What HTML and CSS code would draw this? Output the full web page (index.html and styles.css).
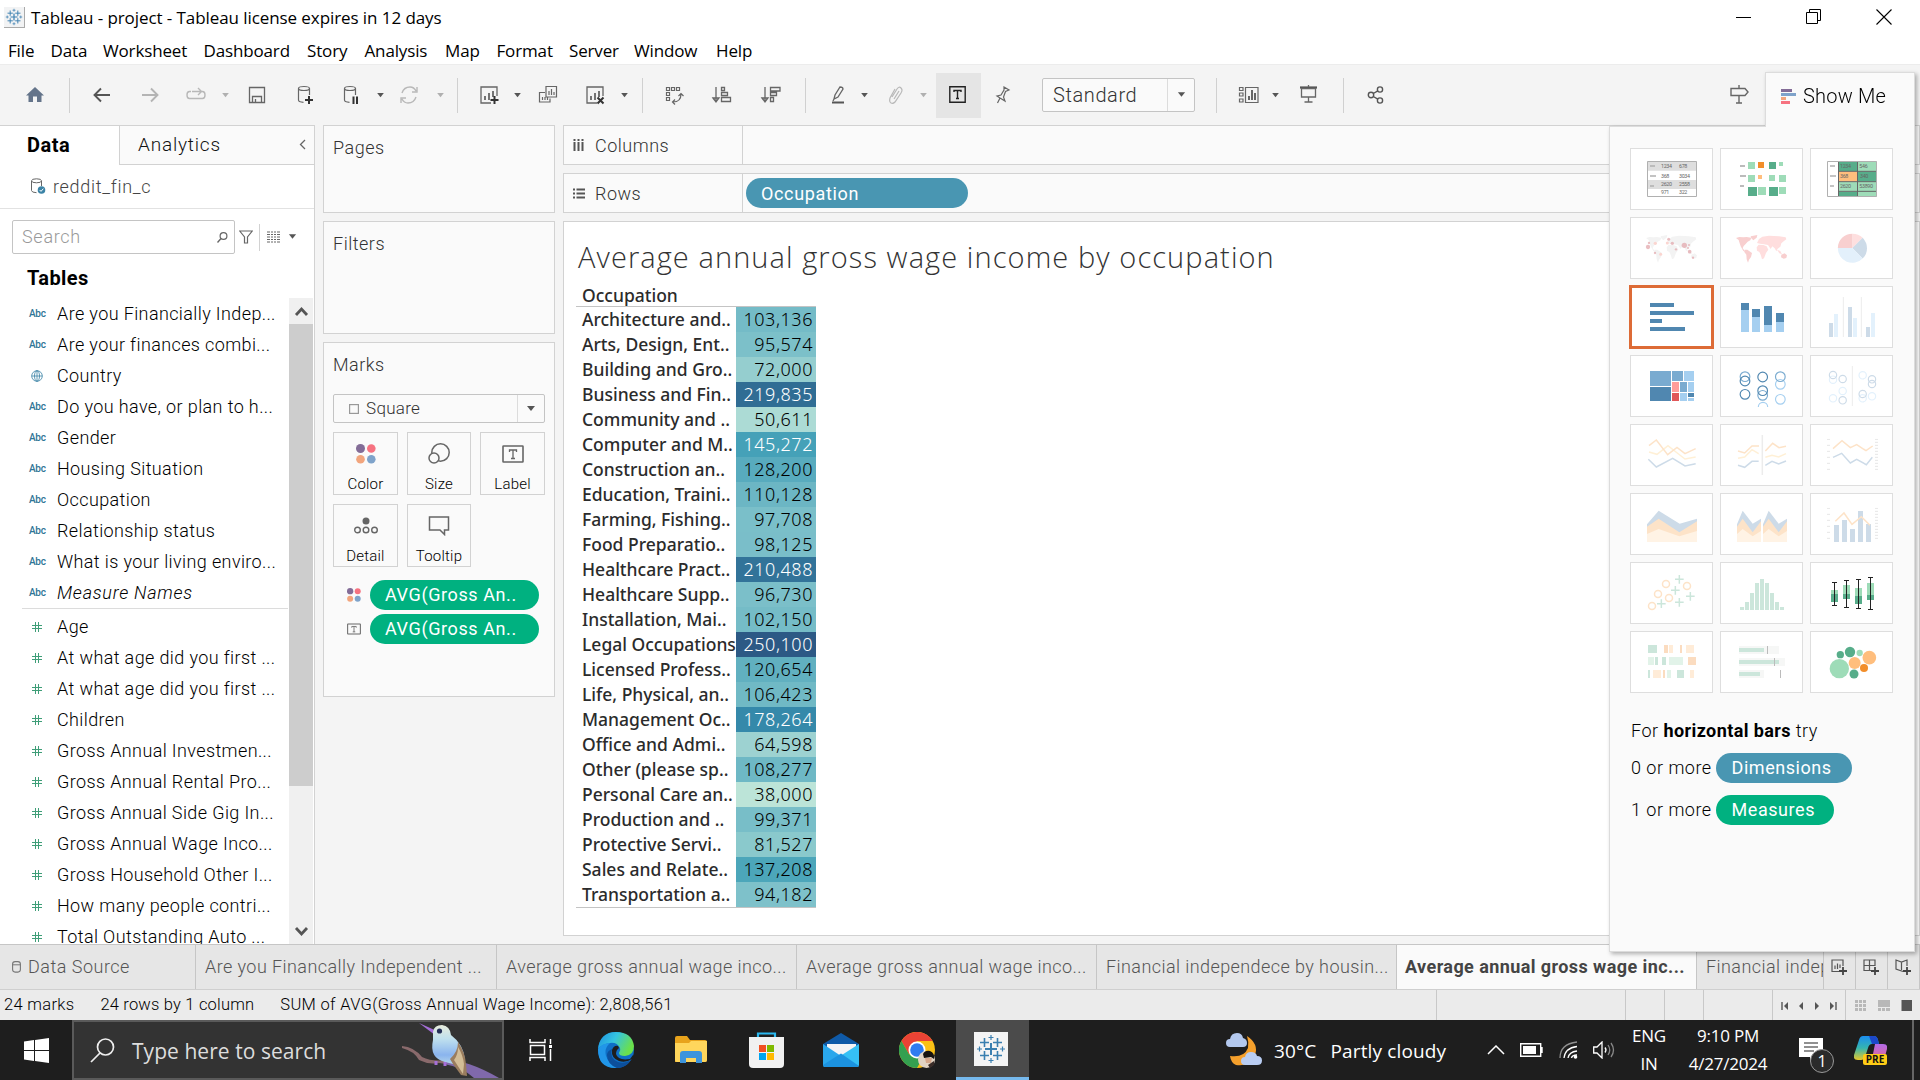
FILE: index.html
```html
<!DOCTYPE html>
<html lang="en">
<head>
<meta charset="utf-8">
<title>Tableau - project</title>
<link rel="stylesheet" href="styles.css">
</head>
<body>
<svg class="defs" aria-hidden="true">
  <symbol id="caret" viewBox="0 0 10 6"><path d="M1 0h8L5 5z" fill="currentColor"/></symbol>
  <symbol id="tableau" viewBox="0 0 34 34"><g stroke="#3a7fb0" fill="none"><path d="M17 11v12M11 17h12" stroke-width="2"/><path d="M10.500 6v9M6 10.500h9M23.500 6v9M19 10.500h9M10.500 19v9M6 23.500h9M23.500 19v9M19 23.500h9" stroke-width="1.600"/><path d="M17 3v5M14.500 5.500h5M17 26v5M14.500 28.500h5M5.500 14.500v5M3 17h5M28.500 14.500v5M26 17h5" stroke-width="1.200"/></g></symbol>
  <symbol id="hash" viewBox="0 0 10 10"><path d="M3.500 0v10M6.500 0v10M0 3.500h10M0 6.500h10" stroke="#3f9e78" stroke-width="1" fill="none"/></symbol>
  <symbol id="colors" viewBox="0 0 20 20"><circle cx="4.500" cy="4.500" r="4.500" fill="#836c97"/><circle cx="15.300" cy="4.500" r="4.300" fill="#f67280"/><circle cx="4.500" cy="15.300" r="4.300" fill="#f2a57d"/><circle cx="15.300" cy="15.300" r="4.300" fill="#7fa3ca"/></symbol>
  <symbol id="tbox" viewBox="0 0 22 18"><rect x="1" y="1" width="20" height="16" rx=".5" fill="none" stroke="currentColor" stroke-width="1.600"/><path d="M7.500 7V5h7v2M11 5v8.500M9 13.500h4" fill="none" stroke="currentColor" stroke-width="1.300"/></symbol>
  <symbol id="chartsheet" viewBox="0 0 26 26"><path d="M15 21H5V5h16v9" fill="none" stroke="#666" stroke-width="1.300"/><path d="M9 18v-4M13 18v-7M17 15V9" stroke="#666" stroke-width="1.800"/></symbol>
  <symbol id="db" viewBox="0 0 26 26"><ellipse cx="12" cy="6.500" rx="5.500" ry="2" fill="none" stroke="#666" stroke-width="1.200"/><path d="M6.500 6.500V18q0 2 5 2.300M17.500 6.500V13" fill="none" stroke="#666" stroke-width="1.200"/></symbol>
  <symbol id="ticks" viewBox="0 0 153 96"><path d="M0 2h9M0 20h9M0 38h9M0 56h9M0 74h9M0 92h9M144 2h9M144 11h9M144 20h9M144 29h9M144 38h9M144 47h9M144 56h9M144 65h9M144 74h9M144 83h9M144 92h9" stroke="#e6e6e6" stroke-width="3"/></symbol>
</svg>

<header class="titlebar">
  <svg class="app-icon"><use href="#tableau"/></svg>
  <span class="title">Tableau - project - Tableau license expires in 12 days</span>
  <div class="window-buttons">
    <svg width="16" height="20" viewBox="0 0 16 20"><path d="M0 10.500h15" stroke="#000"/></svg>
    <svg width="16" height="20" viewBox="0 0 16 20"><path d="M.5 5.500h11v11H.5zM3.500 5V2.500h11v11h-3" fill="none" stroke="#000"/></svg>
    <svg width="16" height="20" viewBox="0 0 16 20"><path d="M.5 2.500l15 15M15.500 2.500l-15 15" stroke="#000" stroke-width="1.100"/></svg>
  </div>
</header>
<nav class="menubar"><span>File</span><span>Data</span><span>Worksheet</span><span>Dashboard</span><span>Story</span><span>Analysis</span><span>Map</span><span>Format</span><span>Server</span><span>Window</span><span>Help</span></nav>

<div class="toolbar">
  <svg class="tool" viewBox="0 0 26 26"><path d="M13 5L4 13.500h2.500V20h4.500v-5.500h4V20h4.500v-6.500H22z" fill="#64748a"/></svg>
  <i class="sep"></i>
  <svg class="tool" viewBox="0 0 26 26"><path d="M21 13H6M12 6.500L5.500 13l6.500 6.500" fill="none" stroke="#555" stroke-width="1.900"/></svg>
  <svg class="tool" viewBox="0 0 26 26"><path d="M5 13h15M14 6.500l6.500 6.500-6.500 6.500" fill="none" stroke="#b4b4b4" stroke-width="1.900"/></svg>
  <svg class="tool" viewBox="0 0 26 26"><path d="M8 9.500H6.500Q4 9.500 4 13t2.500 3.500h13Q22 16.500 22 13t-2.500-3.500H9M15 6l3.500 3.500L15 13" fill="none" stroke="#b8b8b8" stroke-width="1.400"/></svg>
  <svg class="caret faint"><use href="#caret"/></svg>
  <svg class="tool" viewBox="0 0 26 26"><path d="M5.500 5.500h15v15h-15zM8.500 20v-5.500h9V20M11.500 20v-3" fill="none" stroke="#666" stroke-width="1.300"/></svg>
  <svg class="tool" viewBox="0 0 26 26"><use href="#db"/><path d="M17 14v8M13 18h8" stroke="#333" stroke-width="2"/></svg>
  <svg class="tool" viewBox="0 0 26 26"><use href="#db"/><path d="M15.500 14.500V22M19 14.500V22" stroke="#333" stroke-width="2"/></svg>
  <svg class="caret"><use href="#caret"/></svg>
  <svg class="tool" viewBox="0 0 26 26"><path d="M6 11q2-6 8-6 4 0 6 4M20 15q-2 6-8 6-4 0-6-4M21 5v5h-5M5 21v-5h5" fill="none" stroke="#b8b8b8" stroke-width="1.400"/></svg>
  <svg class="caret faint"><use href="#caret"/></svg>
  <i class="sep"></i>
  <svg class="tool" viewBox="0 0 26 26"><use href="#chartsheet"/><path d="M18.500 14v8M14.500 18h8" stroke="#333" stroke-width="2"/></svg>
  <svg class="caret"><use href="#caret"/></svg>
  <svg class="tool" viewBox="0 0 26 26"><path d="M11 4.500h10.500V15H11zM10 10.500H4.500V20H15v-3.500M7.500 18v-3M10 18v-3M12.500 18v-3M14 13V9M16.500 13V7M19 13v-3" fill="none" stroke="#666" stroke-width="1.200"/></svg>
  <svg class="tool" viewBox="0 0 26 26"><use href="#chartsheet"/><path d="M15.500 15.500l6 6M21.500 15.500l-6 6" stroke="#333" stroke-width="2"/></svg>
  <svg class="caret"><use href="#caret"/></svg>
  <i class="sep"></i>
  <svg class="tool" viewBox="0 0 26 26"><path d="M5.500 5.500h3v3h-3zM10.500 5.500h3v3h-3zM15.500 5.500h3v3h-3zM5.500 10.500h3v3h-3zM5.500 15.500h3v3h-3zM12 20q8 0 8-8M14 17.500L11.500 20l2.500 2.500M17.500 14l2.500-2.500 2.500 2.500" fill="none" stroke="#666" stroke-width="1.200"/></svg>
  <svg class="tool" viewBox="0 0 26 26"><path d="M7 5v14M4 16l3 4 3-4zM12.500 5.500h3v3h-3zM12.500 10.500h6v3h-6zM12.500 15.500h9v4h-9z" fill="none" stroke="#666" stroke-width="1.300"/></svg>
  <svg class="tool" viewBox="0 0 26 26"><path d="M7 5v14M4 16l3 4 3-4zM12.500 5.500h9.500v3.500h-9.500zM12.500 10.500h6v3h-6zM12.500 15.500h3v4h-3z" fill="none" stroke="#666" stroke-width="1.300"/></svg>
  <i class="sep"></i>
  <svg class="tool" viewBox="0 0 26 26"><path d="M9 17l1-4 5-8q3 0 3 2l-5 8zl-1 2" fill="none" stroke="#666" stroke-width="1.300"/><path d="M7 20.500h12" stroke="#555" stroke-width="2"/></svg>
  <svg class="caret"><use href="#caret"/></svg>
  <svg class="tool" viewBox="0 0 26 26"><path d="M10 15l5-8q2-3 4-1t0 5l-6 9q-2 2-4 1t-1-5l5-9M12 17l5-8" fill="none" stroke="#b8b8b8" stroke-width="1.200"/></svg>
  <svg class="caret faint"><use href="#caret"/></svg>
  <span class="tool-active"><svg width="17" height="17" viewBox="0 0 17 17"><path d="M.8.800h15.400v15.400H.8zM5 6V4.500h7V6M8.500 4.500v8M7 12.500h3" fill="none" stroke="#222" stroke-width="1.400"/></svg></span>
  <svg class="tool" viewBox="0 0 26 26"><path d="M14 5l5 3-3.500 1.500L13.500 15l1.500 4-5-3-3-2 4-1 3-5zM10 16l-2.500 5" fill="none" stroke="#666" stroke-width="1.200"/></svg>
  <span class="fit-select"><span>Standard</span><b><svg class="caret-lg"><use href="#caret"/></svg></b></span>
  <i class="sep"></i>
  <svg class="tool" viewBox="0 0 26 26"><path d="M3.500 5.500h3.500v3H3.500zM3.500 11h3.500v3H3.500zM3.500 17h3.500v3H3.500zM9.500 5.500H22v15H9.500z" fill="none" stroke="#666" stroke-width="1.200"/><path d="M13 18v-4M16 18V8M19 18v-7" stroke="#666" stroke-width="2"/></svg>
  <svg class="caret"><use href="#caret"/></svg>
  <svg class="tool" viewBox="0 0 26 26"><path d="M5 5.500h17" stroke="#555" stroke-width="2.200"/><path d="M13.500 3v2M6.500 6.500h14V15h-14zM13.500 15v5M9.500 20h8" fill="none" stroke="#666" stroke-width="1.300"/></svg>
  <i class="sep"></i>
  <svg class="tool" viewBox="0 0 26 26"><g fill="none" stroke="#555" stroke-width="1.400"><circle cx="8" cy="13" r="2.700"/><circle cx="17" cy="7.500" r="2.600"/><circle cx="17" cy="18.500" r="2.600"/><path d="M10.300 11.500l4.500-2.700M10.300 14.500l4.500 2.700"/></g></svg>
  <svg class="tool" viewBox="0 0 26 26"><path d="M5 6.500h14l3 3.500-3 3.500H5zM13 3v3.500M13 13.500V21M10 21h6" fill="none" stroke="#666" stroke-width="1.400"/></svg>
</div>

<main class="workspace">
  <aside class="data-pane">
    <div class="pane-tabs"><b>Data</b><div class="analytics"><span>Analytics</span><svg width="7" height="11" viewBox="0 0 7 11"><path d="M6 1L1.500 5.500 6 10" fill="none" stroke="#666" stroke-width="1.300"/></svg></div></div>
    <div class="source"><svg width="15" height="17" viewBox="0 0 15 17"><ellipse cx="5.500" cy="2.800" rx="5" ry="2" fill="none" stroke="#666"/><path d="M.5 3v9.500q0 2 5 2.200M10.500 3v5" fill="none" stroke="#666"/><circle cx="10.500" cy="12" r="3.800" fill="#3b83a6"/><path d="M8.700 12l1.300 1.400 2.300-2.700" fill="none" stroke="#fff"/></svg><span>reddit_fin_c</span></div>
    <div class="search-row">
      <div class="search-box"><span>Search</span><svg width="11" height="11" viewBox="0 0 11 11"><circle cx="6.500" cy="4" r="3.400" fill="none" stroke="#666" stroke-width="1.200"/><path d="M4 6.500L.5 10.500" stroke="#666" stroke-width="1.300"/></svg></div>
      <svg width="14" height="14" viewBox="0 0 14 14"><path d="M.7 1h12.600L8.500 7v6h-3V7z" fill="none" stroke="#666" stroke-width="1.200"/></svg>
      <i></i>
      <svg width="13" height="12" viewBox="0 0 13 12"><path d="M0 1h3M4 1h2M7 1h2M10 1h3M0 3.500h3M4 3.500h2M7 3.500h2M10 3.500h3M0 6h3M4 6h2M7 6h2M10 6h3M0 8.500h3M4 8.500h2M7 8.500h2M10 8.500h3M0 11h3M4 11h2M7 11h2M10 11h3" stroke="#666" stroke-width="1.200"/></svg>
      <svg class="caret-sm"><use href="#caret"/></svg>
    </div>
    <h3>Tables</h3>
    <div class="field-area">
      <ul class="fields">
        <li><em>Abc</em>Are you Financially Indep...</li>
        <li><em>Abc</em>Are your finances combi...</li>
        <li><svg width="12" height="12" viewBox="0 0 12 12"><g fill="none" stroke="#3b83a6" stroke-width=".8"><circle cx="6" cy="6" r="5.300"/><ellipse cx="6" cy="6" rx="2.500" ry="5.300"/><path d="M.7 6h10.600M6 .7v10.600"/></g></svg>Country</li>
        <li><em>Abc</em>Do you have, or plan to h...</li>
        <li><em>Abc</em>Gender</li>
        <li><em>Abc</em>Housing Situation</li>
        <li><em>Abc</em>Occupation</li>
        <li><em>Abc</em>Relationship status</li>
        <li><em>Abc</em>What is your living enviro...</li>
        <li class="generated"><em>Abc</em>Measure Names</li>
        <li class="rule"></li>
        <li><svg class="hash"><use href="#hash"/></svg>Age</li>
        <li><svg class="hash"><use href="#hash"/></svg>At what age did you first ...</li>
        <li><svg class="hash"><use href="#hash"/></svg>At what age did you first ...</li>
        <li><svg class="hash"><use href="#hash"/></svg>Children</li>
        <li><svg class="hash"><use href="#hash"/></svg>Gross Annual Investmen...</li>
        <li><svg class="hash"><use href="#hash"/></svg>Gross Annual Rental Pro...</li>
        <li><svg class="hash"><use href="#hash"/></svg>Gross Annual Side Gig In...</li>
        <li><svg class="hash"><use href="#hash"/></svg>Gross Annual Wage Inco...</li>
        <li><svg class="hash"><use href="#hash"/></svg>Gross Household Other I...</li>
        <li><svg class="hash"><use href="#hash"/></svg>How many people contri...</li>
        <li><svg class="hash"><use href="#hash"/></svg>Total Outstanding Auto ...</li>
      </ul>
      <div class="scrollbar">
        <svg width="24" height="26" viewBox="0 0 24 26"><path d="M7 17l5.500-6 5.500 6" fill="none" stroke="#555" stroke-width="2.800"/></svg>
        <div class="thumb"></div>
        <svg width="24" height="26" viewBox="0 0 24 26"><path d="M7 10l5.500 6 5.500-6" fill="none" stroke="#555" stroke-width="2.800"/></svg>
      </div>
    </div>
  </aside>

  <section class="cards">
    <div class="card pages">Pages</div>
    <div class="card filters">Filters</div>
    <div class="card marks">Marks
      <div class="mark-type"><svg width="10" height="10" viewBox="0 0 10 10"><rect x=".6" y=".6" width="8.800" height="8.800" fill="none" stroke="#999" stroke-width="1.200"/></svg><span>Square</span><b><svg class="caret-sm"><use href="#caret"/></svg></b></div>
      <div class="mark-buttons">
        <div><svg width="20" height="20"><use href="#colors"/></svg>Color</div>
        <div><svg width="22" height="22" viewBox="0 0 22 22"><circle cx="12.500" cy="9.500" r="8.700" fill="none" stroke="#666" stroke-width="1.500"/><circle cx="6" cy="15" r="5" fill="#fafafa" stroke="#666" stroke-width="1.500"/></svg>Size</div>
        <div><svg width="22" height="18" class="t"><use href="#tbox"/></svg>Label</div>
        <div><svg width="24" height="18" viewBox="0 0 24 18"><circle cx="12" cy="4" r="3.500" fill="#666"/><g fill="none" stroke="#666" stroke-width="1.400"><circle cx="3.500" cy="13" r="2.800"/><circle cx="12" cy="13" r="2.800"/><circle cx="20.500" cy="13" r="2.800"/></g></svg>Detail</div>
        <div><svg width="22" height="20" viewBox="0 0 22 20"><path d="M1.500 1h19v13h-4v4.500L12 14H1.500z" fill="none" stroke="#666" stroke-width="1.500"/></svg>Tooltip</div>
      </div>
      <div class="mark-pill"><svg width="14" height="14"><use href="#colors"/></svg><span class="pill green">AVG(Gross An..</span></div>
      <div class="mark-pill"><svg width="14" height="12" class="t"><use href="#tbox"/></svg><span class="pill green">AVG(Gross An..</span></div>
    </div>
  </section>

  <section class="sheet">
    <div class="shelf"><div class="shelf-name"><svg width="11" height="12" viewBox="0 0 11 12"><path d="M1.500 0v2M5.500 0v2M9.500 0v2M1.500 3v9M5.500 3v9M9.500 3v9" stroke="#555" stroke-width="2"/></svg><span>Columns</span></div></div>
    <div class="shelf"><div class="shelf-name rows"><svg width="12" height="11" viewBox="0 0 12 11"><path d="M0 1.500h2M0 5.500h2M0 9.500h2M3.500 1.500H12M3.500 5.500H12M3.500 9.500H12" stroke="#555" stroke-width="1.800"/></svg><span>Rows</span></div><span class="pill blue">Occupation</span></div>
    <div class="view">
      <h1>Average annual gross wage income by occupation</h1>
      <div class="crosstab">
        <div class="head">Occupation</div>
        <div class="row"><span>Architecture and..</span><b style="background:#74bbc7">103,136</b></div>
        <div class="row"><span>Arts, Design, Ent..</span><b style="background:#7cc0c9">95,574</b></div>
        <div class="row"><span>Building and Gro..</span><b style="background:#95cecf">72,000</b></div>
        <div class="row"><span>Business and Fin..</span><b class="dark" style="background:#306d94">219,835</b></div>
        <div class="row"><span>Community and ..</span><b style="background:#acdbd5">50,611</b></div>
        <div class="row"><span>Computer and M..</span><b class="dark" style="background:#45a1b8">145,272</b></div>
        <div class="row"><span>Construction an..</span><b style="background:#58abbe">128,200</b></div>
        <div class="row"><span>Education, Traini..</span><b style="background:#6cb6c4">110,128</b></div>
        <div class="row"><span>Farming, Fishing..</span><b style="background:#7abfc9">97,708</b></div>
        <div class="row"><span>Food Preparatio..</span><b style="background:#7abec9">98,125</b></div>
        <div class="row"><span>Healthcare Pract..</span><b class="dark" style="background:#327399">210,488</b></div>
        <div class="row"><span>Healthcare Supp..</span><b style="background:#7bbfc9">96,730</b></div>
        <div class="row"><span>Installation, Mai..</span><b style="background:#75bcc7">102,150</b></div>
        <div class="row"><span>Legal Occupations</span><b class="dark" style="background:#2c5985">250,100</b></div>
        <div class="row"><span>Licensed Profess..</span><b style="background:#61b0c0">120,654</b></div>
        <div class="row"><span>Life, Physical, an..</span><b style="background:#70b9c5">106,423</b></div>
        <div class="row"><span>Management Oc..</span><b class="dark" style="background:#3589aa">178,264</b></div>
        <div class="row"><span>Office and Admi..</span><b style="background:#9dd2d1">64,598</b></div>
        <div class="row"><span>Other (please sp..</span><b style="background:#6eb8c5">108,277</b></div>
        <div class="row"><span>Personal Care an..</span><b style="background:#bce4d8">38,000</b></div>
        <div class="row"><span>Production and ..</span><b style="background:#78bec8">99,371</b></div>
        <div class="row"><span>Protective Servi..</span><b style="background:#8ac9cc">81,527</b></div>
        <div class="row"><span>Sales and Relate..</span><b style="background:#4ca6ba">137,208</b></div>
        <div class="row"><span>Transportation a..</span><b style="background:#7ec1ca">94,182</b></div>
      </div>
    </div>
  </section>
</main>

<aside class="show-me">
  <div class="show-me-tab"><svg width="15" height="15" viewBox="0 0 15 15"><path d="M0 0h11v3H0z" fill="#836c97"/><path d="M0 4h15v3H0z" fill="#7fa3ca"/><path d="M0 8h5v3H0z" fill="#f2a57d"/><path d="M0 12h9v3H0z" fill="#f67280"/></svg>Show Me</div>
  <div class="show-me-body">
    <div class="tiles">
      <svg viewBox="60 84 249 186"><path d="M112 124h148v106H112z" fill="#fff"/><path d="M112 124h148v28H112zM112 180h148v27H112z" fill="#dedede"/><path d="M112.500 124.500h147v105h-147z" fill="none" stroke="#b0b0b0" stroke-width="3"/><path d="M120 138h15M120 168h18M120 198h12" stroke="#b0b0b0" stroke-width="5"/><g class="tiny"><text x="153" y="145">1234</text><text x="207" y="145">678</text><text x="153" y="173">368</text><text x="207" y="173">3034</text><text x="153" y="199">2620</text><text x="207" y="199">2558</text><text x="153" y="223">971</text><text x="207" y="223">322</text></g></svg>
      <svg viewBox="330 84 249 186"><path d="M390 138h15M390 168h18M390 198h12" stroke="#bbb" stroke-width="6"/><path d="M414 126h21v21h-21zM507 126h12v12h-12zM414 165h21v21h-21zM477 165h18v18h-18zM507 165h21v21h-21zM444 201h24v24h-24zM507 201h21v21h-21z" fill="#9edcb8"/><path d="M477 126h21v21h-21zM414 201h27v27h-27zM477 201h27v27h-27z" fill="#57ad8a"/><path d="M444 126h18v18h-18z" fill="#f28e2b"/><path d="M444 165h12v12h-12z" fill="#ffbe7d"/></svg>
      <svg viewBox="600 84 249 186"><path d="M652 124h148v106H652z" fill="#fff"/><path d="M685 124h57v30h-57zM742 154h58v31h-58zM685 215h57v15h-57z" fill="#57ad8a"/><path d="M742 124h58v30h-58zM685 185h115v30H685zM742 215h58v15h-58z" fill="#9edcb8"/><path d="M685 154h57v31h-57z" fill="#ffbe7d"/><path d="M685.500 126v102M742.500 126v102M685 154h115M685 185h115M685 214h115" stroke="#666" stroke-width="3"/><path d="M652.500 124.500h147v105h-147z" fill="none" stroke="#b0b0b0" stroke-width="3"/><path d="M660 138h15M660 168h18M660 198h12" stroke="#b0b0b0" stroke-width="5"/><g class="tiny"><text x="690" y="144">1234</text><text x="748" y="144">546</text><text x="690" y="175">368</text><text x="750" y="175">340</text><text x="690" y="205">2620</text><text x="748" y="205">53890</text></g></svg>

      <svg viewBox="60 291 249 186"><g fill="#f3f3f3"><path d="M108 354l10-3 12 1 10-1 14 2-3 8-8 4-6 7-6 6-3 7 6 7 4 5-8-4-8-14-4-12-2-7zM152 349l20-4-2 8-10 8-6-6z"/><path d="M134 389l8 0 14 10-3 12-6 8-3 9-4-10-1-14-6-8z"/><path d="M176 374l14 1 10 4 5 10-7 10-6 16-6 3-4-14-4-8-7-4-1-10z"/><path d="M171 369l6-12 10-7 20-3 30 2 20 3 2 6-8 6-7 6-3 10-8 6-4 8-5-9-7-6-5 8-8-12-12-2-12-2zM231 389l10 4 5 10-8-3z"/><path d="M244 404l10-4 7 6-2 8-8 2-8-4z"/></g><g fill="#e3a9ae" opacity=".75"><circle cx="114" cy="381" r="6.500"/><circle cx="223" cy="376" r="8"/><circle cx="239" cy="395" r="5.500"/><circle cx="187" cy="370" r="5"/><circle cx="176" cy="358" r="4.500"/><circle cx="135" cy="399" r="3.500"/><circle cx="249" cy="413" r="3.500"/><circle cx="198" cy="388" r="3.500"/><circle cx="117" cy="369" r="3.500"/><circle cx="234" cy="384" r="3"/><circle cx="237" cy="375" r="3"/></g><g fill="#fbd5d0"><circle cx="136" cy="370" r="5"/><circle cx="152" cy="403" r="4.500"/><circle cx="172" cy="369" r="4.500"/></g></svg>
      <svg viewBox="330 291 249 186"><g transform="translate(270)"><g fill="#f8cfcf"><path d="M108 354l10-3 12 1 10-1 14 2-3 8-8 4-6 7-6 6-3 7 6 7 4 5-8-4-8-14-4-12-2-7zM152 349l20-4-2 8-10 8-6-6z"/><path d="M134 389l8 0 14 10-3 12-6 8-3 9-4-10-1-14-6-8zM244 404l10-4 7 6-2 8-8 2-8-4z"/></g><g fill="#ffdede"><path d="M176 374l14 1 10 4 5 10-7 10-6 16-6 3-4-14-4-8-7-4-1-10z"/><path d="M171 369l6-12 10-7 20-3 30 2 20 3 2 6-8 6-7 6-3 10-8 6-4 8-5-9-7-6-5 8-8-12-12-2-12-2zM231 389l10 4 5 10-8-3z"/></g></g></svg>
      <svg viewBox="600 291 249 186"><path d="M727 384V341a43.500 43.500 0 0 1 31 12.500z" fill="#fedfdf"/><path d="M727 384l31-30.500a43.500 43.500 0 0 1 0 62z" fill="#cddbe8"/><path d="M727 384l31 31.500a43.500 43.500 0 0 1-74.500-31.500z" fill="#e3f0fb"/><path d="M727 384h-43.500A43.500 43.500 0 0 1 727 341z" fill="#f8cfcf"/></svg>

      <svg class="selected" viewBox="60 498 249 186"><path d="M120 555h72M120 579h132M120 603h36M120 627h105" stroke="#5087b0" stroke-width="12"/></svg>
      <svg viewBox="330 498 249 186"><path d="M393 570h24v66h-24zM426 591h24v45h-24zM462 615h24v21h-24zM498 606h24v30h-24z" fill="#a5cff0"/><path d="M393 549h24v21h-24zM426 567h24v24h-24zM462 558h24v57h-24zM498 579h24v27h-24z" fill="#5087b0"/></svg>
      <svg viewBox="600 498 249 186"><path d="M700 531v120M754 531v120" stroke="#ececec" stroke-width="3"/><path d="M657 609h12v42h-12zM714 561h12v90h-12zM768 621h12v30h-12z" fill="#cddbe8"/><path d="M672 582h12v69h-12zM729 594h12v57h-12zM783 579h12v72h-12z" fill="#e3f1fc"/></svg>

      <svg viewBox="60 705 249 186"><path d="M120 753h63v45h-63zM186 753h33v30h-33zM210 786h21v30h-21z" fill="#7aabd0"/><path d="M120 801h63v42h-63zM234 819h18v12h-18z" fill="#5087b0"/><path d="M222 753h30v30h-30zM234 786h18v30h-18zM210 819h21v24h-21zM234 834h18v9h-18z" fill="#a5cff0"/><path d="M186 786h21v30h-21z" fill="#ff9d9a"/><path d="M186 819h21v24h-21z" fill="#e15759"/></svg>
      <svg viewBox="330 705 249 186"><g fill="none" stroke-width="3.500"><g stroke="#a5cff0"><circle cx="511" cy="793" r="14.500"/><circle cx="511" cy="838" r="14.500"/><path d="M445 861a14 14 0 0 1 28 0"/></g><g stroke="#7aabd0"><circle cx="405" cy="770" r="14.500"/><circle cx="511" cy="770" r="14.500"/><circle cx="458" cy="826" r="14.500"/></g><g stroke="#5087b0"><circle cx="405" cy="783" r="14.500"/><circle cx="405" cy="823" r="14.500"/><circle cx="458" cy="771" r="14.500"/><circle cx="458" cy="812" r="14.500"/></g></g></svg>
      <svg viewBox="600 705 249 186"><path d="M727 738v120" stroke="#ececec" stroke-width="3"/><g fill="none" stroke-width="3.500"><g stroke="#e3f1fc"><circle cx="669" cy="779" r="11"/><circle cx="698" cy="813" r="11"/><circle cx="669" cy="835" r="11"/><circle cx="758" cy="766" r="11"/><circle cx="758" cy="835" r="11"/><circle cx="786" cy="829" r="11"/></g><g stroke="#cddbe8"><circle cx="669" cy="765" r="11"/><circle cx="698" cy="777" r="11"/><circle cx="698" cy="841" r="11"/><circle cx="786" cy="778" r="11"/><circle cx="786" cy="792" r="11"/><circle cx="758" cy="822" r="11"/></g></g></svg>

      <svg class="lines" viewBox="60 912 249 186"><path d="M117 996l24 7 33-26 20 16 31 24 32-6" stroke="#fff0d6"/><path d="M117 977l22-17 34 44 28-22 24 19 32-15" stroke="#fde3c8"/><path d="M115 1018l24 23 49-26 37 23 32-7" stroke="#cddbe8"/></svg>
      <svg class="lines" viewBox="330 912 249 186"><path class="divider" d="M457 945v120"/><path d="M384 1015l20-4 22-22 20 12M466 1012l20-6 20 5 22-10" stroke="#fff0d6"/><path d="M384 993l20 6 22-21h21M466 993l22-23 19 13 21-4" stroke="#fde3c8"/><path d="M384 1036l20 6 22-18h20M466 1036l20-12 20 8 22-9" stroke="#cddbe8"/></svg>
      <svg class="lines" viewBox="600 912 249 186"><use href="#ticks" x="651" y="956" width="153" height="96"/><path d="M669 986l27-24 25 21 19-9 28 18 20-14" stroke="#fde3c8"/><path d="M669 1012l26-12 26 29 19-11 29 16 18-22" stroke="#cddbe8"/></svg>

      <svg viewBox="60 69 249 186"><path d="M111 163l35-41 63 39 52-15v70H111z" fill="#cddbe8"/><path d="M111 170l35-24 62 41 53-33v62H111z" fill="#fde3c8"/><path d="M111 192l35-15 62 22 53-16v33H111z" fill="#fff3e5"/></svg>
      <svg viewBox="330 69 249 186"><path d="M381 163l17-41 30 39 25-15v70h-72zM459 163l17-41 30 39 25-15v70h-72z" fill="#cddbe8"/><path d="M381 170l17-24 30 41 25-33v62h-72zM459 170l17-24 30 41 25-33v62h-72z" fill="#fde3c8"/><path d="M381 192l17-15 30 22 25-16v33h-72zM459 192l17-15 30 22 25-16v33h-72z" fill="#fff3e5"/></svg>
      <svg class="lines" viewBox="600 69 249 186"><use href="#ticks" x="651" y="113" width="153" height="96"/><path d="M672 165h15v51h-15zM696 150h15v66h-15zM720 177h15v39h-15zM744 123h15v93h-15zM768 162h15v54h-15z" fill="#cddbe8"/><path d="M676 154l26-25 24 34 28-23 26 26" stroke="#fde3c8"/></svg>

      <svg class="lines" viewBox="60 276 249 186"><g stroke="#fde3c8"><circle cx="168" cy="342" r="10.500"/><circle cx="231" cy="348" r="10.500"/><circle cx="144" cy="372" r="10.500"/><circle cx="177" cy="384" r="10.500"/><circle cx="126" cy="408" r="10.500"/></g><path class="plus" d="M208 315v26M195 328h26M196 348v26M183 361h26M241 366v26M228 379h26M208 384v26M195 397h26M154 388v26M141 401h26"/></svg>
      <svg viewBox="330 276 249 186"><path d="M390 411h12v9h-12zM405 396h12v24h-12zM420 369h12v51h-12zM435 339h12v81h-12zM450 327h12v93h-12zM465 339h12v81h-12zM480 369h12v51h-12zM495 396h12v24h-12zM510 411h12v9h-12z" fill="#cce6db"/></svg>
      <svg viewBox="600 276 249 186"><path d="M663 360h21v12h-21zM699 345h21v27h-21zM735 354h21v24h-21zM771 339h21v36h-21z" fill="#9edcb8"/><path d="M663 372h21v24h-21zM699 372h21v15h-21zM735 378h21v24h-21zM771 375h21v15h-21z" fill="#57ad8a"/><path d="M673.500 337v69M666 337.500h15M666 406.500h15M709.500 331v81M702 331.500h15M702 412.500h15M745.500 328v87M738 328.500h15M738 415.500h15M781.500 322v96M774 322.500h15M774 418.500h15" stroke="#222" stroke-width="3"/></svg>

      <svg viewBox="60 483 249 186"><path d="M114 525h27v24h-27zM135 561h9v24h-9zM156 561h12v24h-12zM114 600h6v24h-6zM201 600h21v24h-21z" fill="#cce6db"/><path d="M114 561h18v24h-18zM177 561h42v24h-42zM171 600h12v24h-12z" fill="#e2f3e9"/><path d="M162 525h12v24h-12zM210 525h6v24h-6zM234 561h24v24h-24zM159 600h6v24h-6z" fill="#fbdcc0"/><path d="M177 525h12v24h-12zM228 525h24v24h-24zM129 600h24v24h-24zM240 600h12v24h-12z" fill="#ffecd8"/></svg>
      <svg viewBox="330 483 249 186"><path d="M387 528h120v24H387zM387 564h138v24H387zM387 600h75v24h-75z" fill="#f6f7f6"/><path d="M387 540h75M387 576h120M387 612h63" stroke="#cce6db" stroke-width="12"/><path d="M472.500 528v24M493.500 564v24M511.500 600v24" stroke="#bbb" stroke-width="3"/></svg>
      <svg viewBox="600 483 249 186"><g fill="#57ad8a"><circle cx="691" cy="554" r="11"/><circle cx="720" cy="546" r="15.500"/><circle cx="732" cy="612" r="13.500"/></g><circle cx="688" cy="596" r="29" fill="#9edcb8"/><circle cx="749" cy="549" r="9.500" fill="#9edcb8"/><circle cx="734" cy="579" r="18" fill="#ffbe7d"/><circle cx="778" cy="563" r="20.500" fill="#ffbe7d"/><circle cx="762" cy="594" r="12" fill="#f28e2b"/></svg>
    </div>
    <p class="hint">For <b>horizontal bars</b> try</p>
    <div class="need">0 or more <span class="pill blue">Dimensions</span></div>
    <div class="need second">1 or more <span class="pill green">Measures</span></div>
  </div>
</aside>

<div class="sheet-tabs">
  <span class="tab source-tab"><svg width="9" height="12" viewBox="0 0 9 12"><rect x=".6" y=".6" width="7.800" height="10.500" rx="2.500" fill="none" stroke="#777" stroke-width="1.100"/><path d="M.6 3.800h7.800" stroke="#777"/></svg>Data Source</span>
  <span class="tab">Are you Financally Independent ...</span>
  <span class="tab">Average gross annual wage inco...</span>
  <span class="tab">Average gross annual wage inco...</span>
  <span class="tab">Financial independece by housin...</span>
  <span class="tab active">Average annual gross wage inc...</span>
  <span class="tab cut">Financial independece</span>
  <span class="new"><svg width="17" height="16" viewBox="0 0 17 16"><path d="M8 12.500H1V1h11v6M4 10V6.500M6.500 10V4.500M9 9V5.500" fill="none" stroke="#555" stroke-width="1.200"/><path d="M12 8v8M8 12h8" stroke="#444" stroke-width="1.800"/></svg></span>
  <span class="new"><svg width="17" height="16" viewBox="0 0 17 16"><path d="M8 11.500H1V1h11v6M1 6.500h11M6.500 1v10.500" fill="none" stroke="#555" stroke-width="1.200"/><path d="M12 8v8M8 12h8" stroke="#444" stroke-width="1.800"/></svg></span>
  <span class="new"><svg width="17" height="16" viewBox="0 0 17 16"><path d="M8 12.500L1 10V1l5.500 2L12 1v6M6.500 3v8" fill="none" stroke="#555" stroke-width="1.200"/><path d="M12 8v8M8 12h8" stroke="#444" stroke-width="1.800"/></svg></span>
</div>
<footer class="statusbar">
  <span>24 marks</span><span class="counts">24 rows by 1 column</span><span>SUM of AVG(Gross Annual Wage Income): 2,808,561</span>
  <div class="status-cells">
    <i></i><i></i><i></i><i></i>
    <div class="nav"><svg width="56" height="10" viewBox="0 0 56 10"><path d="M1 1v8" stroke="#555" stroke-width="1.400"/><path d="M7 1v8L3 5zM22 1v8l-4-4zM34 1v8l4-4zM49 1v8l4-4z" fill="#555"/><path d="M55 1v8" stroke="#555" stroke-width="1.400"/></svg></div>
    <div class="nav views"><svg width="58" height="11" viewBox="0 0 58 11"><path d="M0 0h3v3H0zM4 0h3v3H4zM8 0h3v3H8zM0 4h3v3H0zM4 4h3v3H4zM8 4h3v3H8zM0 8h3v3H0zM4 8h3v3H4zM8 8h3v3H8zM23 0h12v7H23zM23 8h3v3h-3zM27 8h3v3h-3zM31 8h4v3h-4z" fill="#b8b8b8"/><path d="M46.500 0H57v11H46.500z" fill="#555"/></svg></div>
  </div>
</footer>

<div class="taskbar">
  <div class="start"><svg width="25" height="25" viewBox="0 0 25 25"><path d="M0 3.500L10 2v10H0zM11 1.900L25 0v12H11zM0 13h10v10L0 21.500zM11 13h14v12l-14-1.900z" fill="#fff"/></svg></div>
  <div class="task-search">
    <svg width="25" height="25" viewBox="0 0 25 25"><circle cx="15.500" cy="9" r="8" fill="none" stroke="#eee" stroke-width="1.700"/><path d="M10 15L1 24" stroke="#eee" stroke-width="1.700"/></svg>
    <span>Type here to search</span>
    <svg class="bird" width="100" height="56" viewBox="0 0 100 56">
      <defs><linearGradient id="plume" x1="0" y1="0" x2="0" y2="1"><stop offset="0" stop-color="#e8ecdc"/><stop offset=".35" stop-color="#bfe0ee"/><stop offset=".75" stop-color="#8ab4ee"/><stop offset="1" stop-color="#b7d8ea"/></linearGradient></defs>
      <path d="M0 26q12 3 17 12 10 5 20 3l8 1v-4Q30 40 20 35 12 25 0 24z" fill="#8a6a6c"/>
      <path d="M44 38Q66 38 97 56H72Q60 45 42 42z" fill="#8069ab"/>
      <path d="M17 1l20 9-4 3z" fill="#a56fd8"/>
      <path d="M31 10q1-7 9-7 8 1 9 10 12 9 14 24l-2 6Q52 43 43 40 27 36 31 18z" fill="url(#plume)"/>
      <path d="M56 20q7 10 8 22l1 12-6-1-8-11-3-5q8-7 8-17z" fill="#9a7d5e"/>
      <path d="M52 38q4-5 4-13 5 8 6 17l-1 10z" fill="#d3bd96"/>
      <circle cx="37.500" cy="9" r="2.600" fill="#243058"/><path d="M34 39v4M43 40v4" stroke="#a56fd8" stroke-width="3"/>
    </svg>
  </div>
  <div class="task"><svg width="24" height="24" viewBox="0 0 24 24"><path d="M1 1v3.500h15V1M1 23v-3.500h15V23M1.500 7.500h14v9h-14zM21.500 1v5M21.500 11v12" fill="none" stroke="#fff" stroke-width="1.500"/><path d="M20 7h3v3h-3z" fill="#fff"/></svg></div>
  <div class="task"><svg width="36" height="36" viewBox="0 0 36 36"><defs><linearGradient id="edgeTop" x1="0" y1="0" x2="1" y2=".4"><stop offset="0" stop-color="#1c8fe0"/><stop offset=".5" stop-color="#35c4e0"/><stop offset="1" stop-color="#6be04a"/></linearGradient></defs><circle cx="18" cy="18" r="18" fill="#0f6fc6"/><path d="M0 17Q2 0 18 0t18 14q0 9-9 10-6 0-6-3 2-3 1-5-3-6-10-5Q4 12 0 17z" fill="url(#edgeTop)"/><path d="M0 17q4-6 12-6Q6 16 8 24q3 8 11 11.900Q0 37 0 17z" fill="#2196e8"/><path d="M14 17q-3 9 6 13 7 2 13-2-5 8-14 8Q9 32 9 23q0-4 5-6z" fill="#0c4f9c"/><path d="M21 16q-3 2-3 6 2 7 14 5l3-4q1 1-1 4-6 4-13 2-8-3-7-11 2-5 6-4z" fill="#1e1e1e"/></svg></div>
  <div class="task"><svg width="32" height="28" viewBox="0 0 32 28"><path d="M0 2q0-2 2-2h10l3 4h15q2 0 2 2v18q0 2-2 2H0z" fill="#e8a31c"/><path d="M0 7h14l2-2h16v19q0 2-2 2H2q-2 0-2-2z" fill="#ffd65c"/><path d="M5 27V18q0-3 3-3h16q3 0 3 3v9h-6v-5H11v5z" fill="#3d94dc"/></svg></div>
  <div class="task"><svg width="35" height="36" viewBox="0 0 35 36"><path d="M9 7V1.500h17V7" fill="none" stroke="#2bb8ef" stroke-width="2.200"/><path d="M0 5h35v27q0 4-4 4H4q-4 0-4-4z" fill="#f1f1f1"/><path d="M10 13h7v7h-7z" fill="#f25022"/><path d="M18 13h7v7h-7z" fill="#7fba00"/><path d="M10 21h7v7h-7z" fill="#00a4ef"/><path d="M18 21h7v7h-7z" fill="#ffb900"/></svg></div>
  <div class="task"><svg width="36" height="34" viewBox="0 0 36 34"><path d="M0 11L18 0l18 11v10H0z" fill="#0f5aa8"/><path d="M4 11h29v10L18 27 4 18z" fill="#f4f4f6"/><path d="M0 11l18 12L0 33z" fill="#2aa7ec"/><path d="M36 11L0 34h34q2 0 2-2z" fill="#35c0f5"/><path d="M0 32l18-11.500L36 33q-1 1-2 1H2q-2 0-2-2z" fill="#1c93e0"/></svg></div>
  <div class="task"><svg width="36" height="36" viewBox="0 0 36 36"><circle cx="18" cy="18" r="18" fill="#fbc116"/><path d="M2.400 9A18 18 0 0 1 33.600 9H18l-7.800 13.500z" fill="#ea4335"/><path d="M2.400 9A18 18 0 0 0 18 36l7.800-13.500H10.200z" fill="#34a050"/><circle cx="18" cy="18" r="8.500" fill="#fff"/><circle cx="18" cy="18" r="6.800" fill="#2f7cf0"/><circle cx="27.500" cy="27.500" r="8.500" fill="#e2d4c4"/><path d="M24 22q2-4 7-3 5 2 4 8l-3-2-7 1z" fill="#17130f"/><path d="M26 26h7l-1 5h-5z" fill="#d6a88c"/><path d="M29 33l6-4v4l-4 3z" fill="#3a2c28"/></svg></div>
  <div class="task running"><svg class="app-tile"><use href="#tableau"/></svg></div>
  <div class="tray">
    <svg width="36" height="34" viewBox="0 0 36 34"><path d="M21 3q12 8 8 19-6 12-19 10-5-2-6-9 14 2 18-8 1-6-1-12z" fill="#f5a02c"/><path d="M4 14q-4 0-4-4t4-4q1-6 7-6 5 0 6 5 4 1 4 5t-4 4z" fill="#b3c8ee"/><path d="M19 32q-4 0-4-4t4-4q1-5 6-5t6 4q5 0 5 4.500T31 32z" fill="#b9cdf2"/></svg>
    <span class="weather">30°C<span>Partly cloudy</span></span>
    <svg width="18" height="10" viewBox="0 0 18 10"><path d="M1 9l8-8 8 8" fill="none" stroke="#fff" stroke-width="1.500"/></svg>
    <svg width="24" height="14" viewBox="0 0 24 14"><path d="M.7.700h20v12.600H.7zM22 4v6" fill="none" stroke="#fff" stroke-width="1.400"/><path d="M3 3h13v8H3z" fill="#fff"/></svg>
    <svg width="19" height="18" viewBox="0 0 19 18"><g fill="none" stroke="#fff" stroke-width="1.300"><path d="M1 17Q1 3 18 1" opacity=".5"/><path d="M5 17Q6 7 18 5.500M9 17q1-6 9-7"/><path d="M12.500 17q.5-3 5.500-3"/></g><circle cx="16.500" cy="16" r="1.800" fill="#fff"/></svg>
    <svg width="22" height="18" viewBox="0 0 22 18"><path d="M.7 6H4l5-5v16l-5-5H.7z" fill="none" stroke="#fff" stroke-width="1.300"/><path d="M12 6.500q2 2.500 0 5" fill="none" stroke="#fff" stroke-width="1.300"/><path d="M15 4q3.500 5 0 10M18 2q5 7 0 14" fill="none" stroke="#888" stroke-width="1.300"/></svg>
    <div class="two-line">ENG<br>IN</div>
    <div class="two-line clock">9:10 PM<br>4/27/2024</div>
    <div class="notice"><svg width="24" height="24" viewBox="0 0 24 24"><path d="M0 0h24v19h-9l-4 5v-5H0z" fill="#fff"/><path d="M5 5h14M5 9h14M5 13h10" stroke="#222" stroke-width="1.200"/></svg><span>1</span></div>
    <div class="copilot"><svg width="33" height="28" viewBox="0 0 33 28"><defs><linearGradient id="cpA" x1="0" y1="0" x2="0" y2="1"><stop offset="0" stop-color="#1b8ef0"/><stop offset=".5" stop-color="#35b5b0"/><stop offset="1" stop-color="#e8c82a"/></linearGradient><linearGradient id="cpB" x1="0" y1="0" x2="0" y2="1"><stop offset="0" stop-color="#b26be8"/><stop offset="1" stop-color="#f2667a"/></linearGradient></defs><path d="M9 0h11q3 0 4 4l1 4h-7q-3 0-4 4l-3 9q-1 3-4 3H4q-5 0-4-5L5 4q1-4 4-4z" fill="url(#cpA)"/><path d="M15 0h5q3 0 4 4l1 4h-7z" fill="#1c48c8"/><path d="M21 8h8q5 0 4 5l-3 11q-1 4-5 4H14q3-1 4-5z" fill="url(#cpB)"/></svg><span>PRE</span></div>
    <i></i>
  </div>
</div>
</body>
</html>
```
FILE: styles.css
```css
* { box-sizing: border-box; }
body { margin: 0; width: 1920px; height: 1080px; overflow: hidden; position: relative; background: #fff; color: #111; font: 300 18px/1 Roboto, "Liberation Sans", sans-serif; display: flex; flex-direction: column; }
svg { flex: none; display: block; }
.defs { position: absolute; width: 0; height: 0; }

/* Window chrome */
.titlebar { height: 36px; flex: none; display: flex; align-items: center; padding: 0 28px 2px 4px; font-family: "Open Sans", sans-serif; font-weight: 400; font-size: 17px; color: #000; }
.app-icon { width: 21px; height: 21px; background: #f2f3f4; border-right: 1px solid #aaa; border-bottom: 1px solid #aaa; margin-right: 6px; }
.title { white-space: nowrap; letter-spacing: -.08px; }
.window-buttons { margin-left: auto; display: flex; gap: 54px; }
.menubar { height: 28px; flex: none; display: grid; grid-template-columns: 42.500px 52.500px 100.500px 103.500px 57.500px 80.500px 51.500px 72.500px 65px 82px auto; padding: 0 0 0 8px; align-items: center; font-family: "Open Sans", sans-serif; font-weight: 400; font-size: 17px; letter-spacing: -.15px; color: #000; }

.toolbar { height: 61px; flex: none; background: #f4f4f4; border-top: 1px solid #ececec; padding-left: 22px; display: grid; align-items: center; grid-template-columns: 47px 20px 48px 46px 37px 24px 48px 46px 37px 21px 39px 22px 19px 36px 23px 47px 37px 23px 19px 48px 49px 47px 20px 34px 23px 36px 18px 54px 52px 174px 20px 34px 25px 48px 20px 363px 26px; }
.tool { width: 26px; height: 26px; margin-top: -1px; }
.caret { width: 9px; height: 5px; margin-left: 1px; color: #555; }
.faint { color: #b0b0b0; }
.caret-sm { width: 10px; height: 6px; color: #555; }
.caret-lg { width: 9px; height: 6px; color: #555; }
.sep { width: 1px; height: 35px; background: #d0d0d0; }
.tool-active { width: 45px; height: 45px; background: #e5e5e5; display: grid; place-items: center; }
.tool-active svg { margin: -2px 2px 0 0; }
.fit-select { width: 153px; height: 34px; background: #fafafa; border: 1px solid #c4c4c4; border-radius: 2px; display: flex; align-items: center; padding-left: 10px; font-size: 20px; letter-spacing: .6px; color: #333; }
.fit-select b { margin-left: auto; width: 27px; height: 32px; border-left: 1px solid #dcdcdc; display: grid; place-items: center; }

/* Workspace */
.workspace { flex: none; height: 819px; background: #f4f4f4; display: flex; }
.data-pane { width: 315px; background: #fff; border-top: 1px solid #d2d2d2; border-right: 1px solid #d2d2d2; display: flex; flex-direction: column; }
.pane-tabs { display: flex; height: 39px; flex: none; font-size: 19px; }
.pane-tabs > b { width: 119px; padding: 9px 0 0 27px; color: #000; font-weight: 700; font-size: 20px; letter-spacing: .5px; }
.analytics { flex: 1; display: flex; align-items: center; justify-content: space-between; padding: 0 8px 1px 18px; background: #fafafa; border-left: 1px solid #d2d2d2; border-bottom: 1px solid #d2d2d2; letter-spacing: .8px; }
.source { height: 44px; flex: none; display: flex; align-items: center; gap: 7px; padding-left: 31px; border-bottom: 1px solid #e2e2e2; color: #444; letter-spacing: .7px; }
.search-row { display: flex; align-items: center; padding: 11px 16px 0 12px; flex: none; height: 45px; }
.search-box { width: 223px; height: 34px; border: 1px solid #c4c4c4; border-radius: 2px; display: flex; align-items: center; justify-content: space-between; padding: 0 6px 0 9px; color: #999; margin-right: 4px; letter-spacing: .7px; }
.search-row i { width: 1px; height: 27px; background: #d2d2d2; margin: 0 7px 0 6px; }
.search-row .caret-sm { margin-left: 8px; width: 9px; }
h3 { margin: 0; padding: 14px 0 0 27px; height: 44px; flex: none; font-size: 20px; font-weight: 700; letter-spacing: .4px; color: #000; }
.field-area { flex: 1; min-height: 0; display: flex; }
.fields { flex: 1; min-width: 0; margin: 0; padding: 0; list-style: none; overflow: hidden; }
.fields li { height: 31px; display: grid; grid-template-columns: 57px auto; justify-content: start; align-items: center; white-space: nowrap; color: #000; letter-spacing: .38px; }
.fields li > svg { margin-left: 31px; }
.fields .hash { width: 10px; height: 10px; margin-left: 32px; }
.fields em { font: 500 10px/1 Roboto, sans-serif; letter-spacing: -.3px; color: #2f7596; padding-left: 29px; }
.fields .generated { font-style: italic; letter-spacing: .75px; }
.fields .rule { height: 3px; margin: 0 1px 0 22px; border-top: 1px solid #dcdcdc; }
.scrollbar { width: 25px; border-right: 1px solid #fff; background: #f0f0f0; display: flex; flex-direction: column; }
.thumb { height: 462px; margin-bottom: auto; background: #cdcdcd; }

.cards { width: 232px; margin-left: 8px; display: flex; flex-direction: column; gap: 8px; color: #333; letter-spacing: .5px; }
.card { background: #fafafa; border: 1px solid #d2d2d2; padding: 13px 9px 0; }
.pages { height: 88px; }
.filters { height: 113px; }
.marks { height: 355px; }
.mark-type { margin-top: 20px; height: 29px; border: 1px solid #c4c4c4; border-radius: 2px; display: flex; align-items: center; padding-left: 15px; gap: 7px; font-size: 17px; letter-spacing: .3px; }
.mark-type b { margin-left: auto; width: 27px; height: 27px; border-left: 1px solid #dcdcdc; display: grid; place-items: center; }
.mark-buttons { margin-top: 9px; display: grid; grid-template-columns: 65px 64px 65px; justify-content: space-between; gap: 9px 0; font-size: 15px; letter-spacing: .2px; color: #000; }
.mark-buttons > div { height: 63px; border: 1px solid #d2d2d2; display: grid; grid-template-rows: 42px 18px; place-items: center; }
.t { color: #666; }
.mark-pill { display: flex; align-items: center; margin-top: 4px; padding-left: 14px; }
.mark-buttons + .mark-pill { margin-top: 13px; }
.mark-pill svg { margin-right: 9px; }
.pill { height: 30px; border-radius: 15px; color: #fff; font-weight: 400; display: flex; align-items: center; white-space: nowrap; }
.green { background: #00b180; }
.blue { background: #4996b2; }
.mark-pill .pill { width: 169px; padding-left: 15px; letter-spacing: .6px; }

.sheet { flex: 1; margin-left: 8px; display: flex; flex-direction: column; gap: 8px; }
.shelf { height: 40px; border: 1px solid #d2d2d2; background: #fafafa; display: flex; align-items: center; }
.shelf-name { width: 179px; height: 38px; border-right: 1px solid #d2d2d2; display: flex; align-items: center; gap: 11px; padding-left: 9px; color: #333; letter-spacing: .5px; }
.shelf-name span { margin-top: 2px; }
.rows { gap: 10px; }
.shelf .pill { margin-left: 3px; width: 222px; padding: 1px 0 0 15px; letter-spacing: .65px; }
.view { height: 715px; border: 1px solid #d2d2d2; background: #fff; padding: 15px 0 0 12px; }
h1 { margin: 0; padding-left: 2px; height: 46px; font: 300 29px/40px "Open Sans", "Noto Sans", sans-serif; letter-spacing: 1.080px; color: #333; white-space: nowrap; }
.crosstab { width: 240px; font: 500 17.500px/24px "Noto Sans", "Open Sans", sans-serif; color: #2b2b2b; border-bottom: 1px solid #c4c4c4; }
.head { height: 24px; padding-left: 6px; border-bottom: 1px solid #c4c4c4; }
.row { height: 25px; display: grid; grid-template-columns: 160px 80px; white-space: nowrap; }
.row span { padding-left: 6px; }
.row b { font-weight: 300; font-size: 18px; letter-spacing: .55px; text-align: right; padding-right: 3px; color: #000; }
.row .dark { color: #fff; }

/* Show Me overlay */
.show-me { position: absolute; left: 1609px; top: 72px; width: 306px; display: flex; flex-direction: column; filter: drop-shadow(2px 2px 2px rgba(0,0,0,.3)); }
.show-me-tab { align-self: flex-end; width: 150px; height: 55px; margin-bottom: -1px; position: relative; z-index: 1; background: #fafafa; border: 1px solid #dcdcdc; border-bottom: 0; display: flex; align-items: center; gap: 7px; padding: 0 0 8px 15px; font-size: 20px; color: #000; letter-spacing: .2px; }
.show-me-body { height: 826px; background: #fafafa; border: 1px solid #dcdcdc; padding: 21px 0 0 20px; color: #000; letter-spacing: .5px; }
.tiles { display: grid; grid-template-columns: repeat(3, 83px); grid-auto-rows: 62px; gap: 7px; }
.tiles > svg { width: 83px; height: 62px; background: #fff; outline: 1px solid #dedede; outline-offset: -1px; }
.tiles > .selected { outline: 3px solid #dd6b36; outline-offset: -2px; }
.tiny { font: 400 16px Roboto, sans-serif; letter-spacing: -1px; fill: #666; }
.lines > path:not([fill]), .lines > g { fill: none; stroke-width: 4.500; }
.lines > .divider { stroke: #ececec; stroke-width: 3; }
.lines > .plus { stroke: #cce6db; stroke-width: 3; }
.hint { margin: 0; height: 60px; padding: 29px 0 0 1px; white-space: nowrap; }
.hint b { font-weight: 700; letter-spacing: .4px; }
.need { display: flex; align-items: center; padding-left: 1px; white-space: pre; line-height: 30px; }
.need .pill { width: 136px; margin-left: -1px; padding-left: 16px; letter-spacing: .55px; }
.need.second { margin-top: 12px; }
.second .pill { width: 118px; }

/* Sheet tabs and status */
.sheet-tabs { height: 46px; flex: none; background: #e6e6e6; border-top: 1px solid #c6c6c6; border-bottom: 1px solid #cfcfcf; display: grid; grid-template-columns: 196px 301px 300px 300px 300px 300px 127px 32px 32px 32px; color: #555; }
.tab { border-right: 1px solid #c6c6c6; display: flex; align-items: center; padding-left: 9px; white-space: nowrap; overflow: hidden; letter-spacing: .42px; }
.source-tab { padding-left: 12px; gap: 7px; letter-spacing: .5px; }
.active { background: #fafafa; font-weight: 700; letter-spacing: .42px; padding-left: 8px; color: #444; }
.new { border-right: 1px solid #c6c6c6; display: grid; place-items: center; }
.statusbar { height: 31px; flex: none; background: #ebebeb; display: flex; align-items: center; gap: 26px; padding-left: 4px; font-size: 16.500px; color: #000; letter-spacing: .32px; }
.statusbar .counts { letter-spacing: .2px; }
.status-cells { margin-left: auto; height: 100%; display: grid; grid-template-columns: 189px 39px 39px 69px 73px 75px; }
.status-cells > * { border-left: 1px solid #c8c8c8; }
.nav { display: flex; align-items: center; padding-left: 8px; }
.views { padding-left: 9px; }

/* Taskbar */
.taskbar { height: 60px; margin-top: -1px; flex: none; background: #1e1e1e; display: grid; grid-template-columns: 72px 432px 76px 75px 75px 75px 75px 76px 73px auto; font-family: "Open Sans", sans-serif; font-weight: 400; color: #fff; }
.start, .task { display: grid; place-items: center; }
.task { padding-right: 3px; }
.task-search { background: #333; border: 2px solid #5a5a5a; display: flex; align-items: center; padding-left: 16px; gap: 17px; color: #ddd; font-size: 21px; letter-spacing: .05px; white-space: nowrap; }
.task-search span { margin-top: 3px; }
.bird { margin-left: auto; }
.running { background: #4b4b4b; border-bottom: 3px solid #76b9ed; }
.app-tile { width: 34px; height: 34px; background: #f4f4f4; }
.tray { display: flex; align-items: center; padding-left: 197px; font-size: 19px; }
.tray > svg, .tray > div { margin-right: 15px; }
.weather { display: flex; gap: 14px; margin: 2px 38px 0 -3px; white-space: nowrap; width: 175px; letter-spacing: .15px; }
.two-line { font-size: 17px; line-height: 28px; text-align: center; width: 38px; letter-spacing: -.2px; }
.tray > .clock { width: 90px; margin-left: 0; margin-right: 26px; }
.notice, .copilot { position: relative; }
.notice span { position: absolute; left: 11px; top: 11px; width: 24px; height: 24px; border: 1px solid #999; border-radius: 50%; background: #2b2b2b; font-size: 16px; line-height: 22px; text-align: center; }
.tray > .copilot { margin-left: 16px; margin-right: auto; }
.copilot span { position: absolute; left: 9px; top: 18px; width: 24px; height: 11px; background: #ffcc16; border-radius: 2px; color: #111; font: 700 10px/11px "Open Sans", sans-serif; text-align: center; }
.tray > i { width: 2px; height: 60px; margin-right: 6px; background: #666; }
```
